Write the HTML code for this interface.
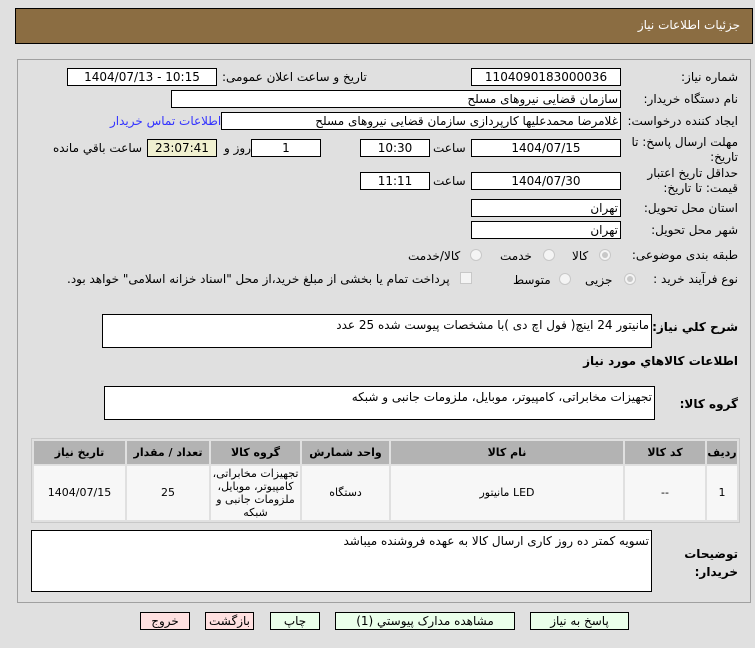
<!DOCTYPE html>
<html><head><meta charset="utf-8">
<style>
*{box-sizing:border-box;margin:0;padding:0}
body{width:755px;height:648px;background:#e0e0e0;font-family:"DejaVu Sans","Liberation Sans",sans-serif;font-size:12px;color:#000;position:relative;overflow:hidden}
.a{position:absolute}
.hdr{left:15px;top:8px;width:738px;height:36px;background:#8b6d42;border:1px solid #000}
.hdr span{position:absolute;right:12px;top:9px;color:#fff;font-size:12px}
.panel{left:17px;top:59px;width:734px;height:544px;border:1px solid #a0a0a0}
.in{position:absolute;background:#fff;border:1px solid #000;height:18px;line-height:16px;text-align:center;font-size:12px;white-space:nowrap;overflow:hidden}
.r{text-align:right;padding-right:2px}
.l{position:absolute;white-space:nowrap;direction:rtl;font-size:12px}
.rad{position:absolute;width:12px;height:12px;border-radius:50%;border:1px solid #c8c8c8;background:#f4f4f4}
.rad.on::after{content:"";position:absolute;left:2px;top:2px;width:6px;height:6px;border-radius:50%;background:#c8c8c8}
.ta{position:absolute;background:#fff;border:1px solid #000;direction:rtl;text-align:right;padding:3px 2px;font-size:12px}
.th,.td{position:absolute;text-align:center;font-size:11px}
.th{background:#b3b3b3;font-weight:bold;top:441px;height:23px;line-height:23px}
.td{background:#f7f7f7;top:466px;height:54px;line-height:54px}
.btn{position:absolute;top:612px;height:18px;border:1px solid #000;text-align:center;line-height:16px;font-size:12px;background:#eaffea}
.red{background:#ffe0e0}
</style></head><body>
<div class="a hdr"><span>جزئیات اطلاعات نیاز</span></div>
<div class="a panel"></div>

<div class="l" style="right:17px;top:70px">شماره نیاز:</div>
<div class="in" style="left:471px;top:68px;width:150px">1104090183000036</div>
<div class="l" style="left:222px;top:70px">تاریخ و ساعت اعلان عمومی:</div>
<div class="in" style="left:67px;top:68px;width:150px">1404/07/13 - 10:15</div>

<div class="l" style="right:17px;top:92px">نام دستگاه خریدار:</div>
<div class="in r" style="left:171px;top:90px;width:450px">سازمان قضایی نیروهای مسلح</div>

<div class="l" style="right:17px;top:114px">ایجاد کننده درخواست:</div>
<div class="in r" style="left:221px;top:112px;width:400px">غلامرضا  محمدعلیها کارپردازی سازمان قضایی نیروهای مسلح</div>
<div class="l" style="left:110px;top:114px;color:#3333ff">اطلاعات تماس خریدار</div>

<div class="l" style="right:17px;top:135px;line-height:15px;text-align:right">مهلت ارسال پاسخ: تا<br>تاریخ:</div>
<div class="in" style="left:471px;top:139px;width:150px">1404/07/15</div>
<div class="l" style="left:433px;top:141px">ساعت</div>
<div class="in" style="left:360px;top:139px;width:70px">10:30</div>
<div class="in" style="left:251px;top:139px;width:70px">1</div>
<div class="l" style="left:224px;top:141px">روز و</div>
<div class="in" style="left:147px;top:139px;width:70px;background:#f0f0d0">23:07:41</div>
<div class="l" style="left:53px;top:141px">ساعت باقي مانده</div>

<div class="l" style="right:17px;top:166px;line-height:15px;text-align:right">حداقل تاریخ اعتبار<br>قیمت: تا تاریخ:</div>
<div class="in" style="left:471px;top:172px;width:150px">1404/07/30</div>
<div class="l" style="left:433px;top:174px">ساعت</div>
<div class="in" style="left:360px;top:172px;width:70px">11:11</div>

<div class="l" style="right:17px;top:201px">استان محل تحویل:</div>
<div class="in r" style="left:471px;top:199px;width:150px">تهران</div>
<div class="l" style="right:17px;top:223px">شهر محل تحویل:</div>
<div class="in r" style="left:471px;top:221px;width:150px">تهران</div>

<div class="l" style="right:17px;top:248px">طبقه بندی موضوعی:</div>
<div class="rad on" style="left:599px;top:249px"></div><div class="l" style="left:572px;top:249px">کالا</div>
<div class="rad" style="left:543px;top:249px"></div><div class="l" style="left:500px;top:249px">خدمت</div>
<div class="rad" style="left:470px;top:249px"></div><div class="l" style="left:408px;top:249px">کالا/خدمت</div>

<div class="l" style="right:17px;top:272px">نوع فرآیند خرید :</div>
<div class="rad on" style="left:624px;top:273px"></div><div class="l" style="left:585px;top:273px">جزیی</div>
<div class="rad" style="left:559px;top:273px"></div><div class="l" style="left:513px;top:273px">متوسط</div>
<div class="a" style="left:460px;top:272px;width:12px;height:12px;border:1px solid #c8c8c8;background:#f4f4f4"></div>
<div class="l" style="left:67px;top:272px">پرداخت تمام یا بخشی از مبلغ خرید،از محل "اسناد خزانه اسلامی" خواهد بود.</div>

<div class="l" style="right:17px;top:320px;font-weight:bold">شرح کلي نياز:</div>
<div class="ta" style="left:102px;top:314px;width:550px;height:34px">مانیتور 24 اینچ( فول اچ دی )با مشخصات پیوست شده 25 عدد</div>
<div class="l" style="right:17px;top:354px;font-weight:bold">اطلاعات کالاهاي مورد نياز</div>
<div class="l" style="right:17px;top:397px;font-weight:bold">گروه کالا:</div>
<div class="ta" style="left:104px;top:386px;width:551px;height:34px">تجهیزات مخابراتی، کامپیوتر، موبایل، ملزومات جانبی و شبکه</div>

<div class="a" style="left:31px;top:438px;width:709px;height:85px;border:1px solid #c8c8c8"></div>
<div class="th" style="left:707px;width:30px">ردیف</div>
<div class="th" style="left:625px;width:80px">کد کالا</div>
<div class="th" style="left:391px;width:232px">نام کالا</div>
<div class="th" style="left:302px;width:87px">واحد شمارش</div>
<div class="th" style="left:211px;width:89px">گروه کالا</div>
<div class="th" style="left:127px;width:82px">تعداد / مقدار</div>
<div class="th" style="left:34px;width:91px">تاریخ نیاز</div>
<div class="td" style="left:707px;width:30px">1</div>
<div class="td" style="left:625px;width:80px">--</div>
<div class="td" style="left:391px;width:232px">مانیتور LED</div>
<div class="td" style="left:302px;width:87px">دستگاه</div>
<div class="td" style="left:211px;width:89px;line-height:13px;padding-top:1px;direction:rtl">تجهیزات مخابراتی، کامپیوتر، موبایل، ملزومات جانبی و شبکه</div>
<div class="td" style="left:127px;width:82px">25</div>
<div class="td" style="left:34px;width:91px">1404/07/15</div>

<div class="l" style="right:17px;top:545px;font-weight:bold;line-height:18px;text-align:right">توضیحات<br>خریدار:</div>
<div class="ta" style="left:31px;top:530px;width:621px;height:62px">تسویه کمتر ده روز کاری ارسال کالا به عهده فروشنده میباشد</div>

<div class="btn" style="left:530px;width:99px">پاسخ به نیاز</div>
<div class="btn" style="left:335px;width:180px">مشاهده مدارک پیوستي (1)</div>
<div class="btn" style="left:270px;width:50px">چاپ</div>
<div class="btn red" style="left:205px;width:49px">بازگشت</div>
<div class="btn red" style="left:140px;width:50px">خروج</div>
</body></html>
